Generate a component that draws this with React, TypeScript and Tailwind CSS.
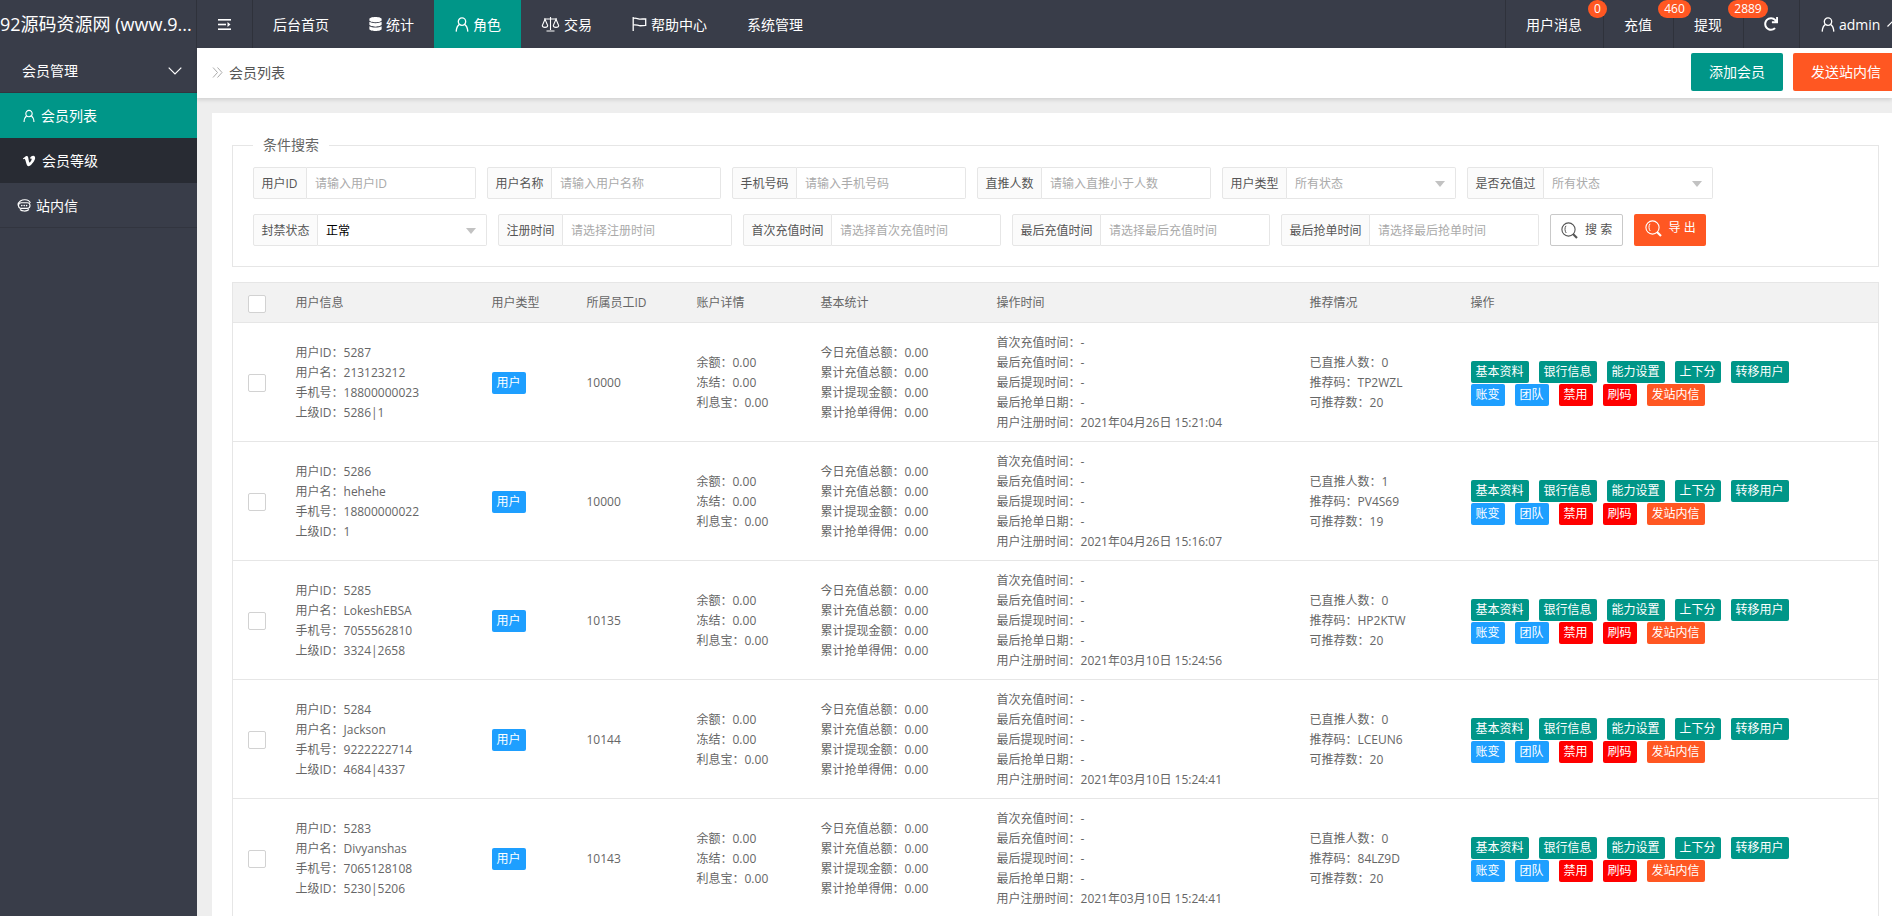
import React from 'react';
import { FaDatabase, FaVimeoV, FaRedo } from 'react-icons/fa';

const UserIcon = ({ className = 'w-[14px] h-[15px]' }: { className?: string }) => (
  <svg viewBox="0 0 14 15" fill="none" stroke="currentColor" strokeWidth="1.3" className={className}>
    <circle cx="7" cy="4.6" r="3.7" />
    <path d="M4.2 7.6C2.4 8.8 1.4 11 1.2 14.6M9.8 7.6c1.8 1.2 2.8 3.4 3 7" />
  </svg>
);

const ScaleIcon = () => (
  <svg viewBox="0 0 18 16" fill="none" stroke="currentColor" strokeWidth="1.1" className="w-[19px] h-[16px]">
    <path d="M9 1v13M5 15h8M2.5 3h13" />
    <path d="M3.5 3.2.8 9.6c0 2.4 5.4 2.4 5.4 0L3.5 3.2zM14.5 3.2l-2.7 6.4c0 2.4 5.4 2.4 5.4 0l-2.7-6.4z" />
  </svg>
);

const FlagIcon = () => (
  <svg viewBox="0 0 15 14" fill="none" stroke="currentColor" strokeWidth="1.3" className="w-[15px] h-[14px]">
    <path d="M1.2 0v14" />
    <path d="M1.2 1.5c2.5-1 4 .3 6 .6 2 .3 4-.3 6.5-.3v6.6c-2.5 0-4.5.6-6.5.3-2-.3-3.5-1.5-6-.7" />
  </svg>
);

const ShrinkIcon = () => (
  <svg viewBox="0 0 13 11" fill="currentColor" className="w-[13px] h-[11px]">
    <rect x="0" y="0" width="13" height="1.6" />
    <rect x="0" y="4.7" width="8" height="1.6" />
    <rect x="0" y="9.4" width="13" height="1.6" />
    <path d="M9.5 3l3 2.5-3 2.5z" />
  </svg>
);

const ChatIcon = () => (
  <svg viewBox="0 0 14 13" fill="none" stroke="currentColor" strokeWidth="1.1" className="w-[14px] h-[13px]">
    <path d="M1 6.5C.9 2.5 5 .6 8 .7c2.8.1 4.8 1.5 5.3 3.3" />
    <rect x="1.5" y="3.8" width="11.5" height="5.6" rx="2.8" />
    <path d="M3 10.5c2 2 6.5 2.2 9 0" />
    <circle cx="4.8" cy="6.6" r=".8" fill="currentColor" stroke="none" />
    <circle cx="7.2" cy="6.6" r=".8" fill="currentColor" stroke="none" />
    <circle cx="9.6" cy="6.6" r=".8" fill="currentColor" stroke="none" />
  </svg>
);

const SearchIcon = () => (
  <svg viewBox="0 0 17 17" fill="none" stroke="currentColor" className="w-[17px] h-[17px]">
    <circle cx="7.5" cy="7.5" r="6.6" strokeWidth="1.1" />
    <path d="M5 3.8C3.6 5.5 3.6 9 5.2 11" strokeWidth="1" />
    <path d="M12 12l4 4" strokeWidth="2.2" />
  </svg>
);

function NavItem({ icon, children, active }: { icon?: React.ReactNode; children: React.ReactNode; active?: boolean }) {
  return (
    <div className={`flex items-center gap-[3px] pr-[20px] h-full whitespace-nowrap ${active ? 'pl-[21px] bg-[#009688]' : 'pl-[20px]'}`}>
      {icon}
      <span className={icon ? 'ml-[1px]' : ''}>{children}</span>
    </div>
  );
}

function RightItem({ label, badge, badgeClass }: { label: string; badge: string; badgeClass: string }) {
  return (
    <div className="relative flex items-center h-full shrink-0 whitespace-nowrap border-l border-[#2f323b] pl-[20px] pr-[21px]">
      {label}
      <span className={`absolute z-10 top-0 h-[18px] rounded-[9px] bg-[#FF5722] text-white text-[12px] leading-[18px] text-center ${badgeClass}`}>
        {badge}
      </span>
    </div>
  );
}

function Field({ label, placeholder, select, value, labelClass = '' }: { label: string; placeholder?: string; select?: boolean; value?: string; labelClass?: string }) {
  return (
    <div className="flex h-[32px] text-[12px]">
      <label className={`flex items-center px-[7.5px] pt-px border border-[#e6e6e6] bg-[#fbfbfb] rounded-l-[2px] text-[#555] whitespace-nowrap ${labelClass}`}>
        {label}
      </label>
      {select ? (
        <div className="relative flex items-center w-[169px] pl-[8px] pt-px bg-white border border-l-0 border-[#e6e6e6] rounded-r-[2px]">
          <span className={value ? 'text-black' : 'text-[#aaa]'}>{value || placeholder}</span>
          <span className="absolute right-[10px] top-[13px] w-0 h-0 border-x-[5px] border-x-transparent border-t-[6px] border-t-[#c2c2c2]" />
        </div>
      ) : (
        <input
          placeholder={placeholder}
          className="w-[169px] pl-[8px] pt-px bg-white border border-l-0 border-[#e6e6e6] rounded-r-[2px] outline-none placeholder:text-[#aaa]"
        />
      )}
    </div>
  );
}

const rows = [
  { id: '5287', name: '213123212', phone: '18800000023', parent: '5286|1', staff: '10000', direct: '0', code: 'TP2WZL', left: '20', reg: '2021年04月26日 15:21:04' },
  { id: '5286', name: 'hehehe', phone: '18800000022', parent: '1', staff: '10000', direct: '1', code: 'PV4S69', left: '19', reg: '2021年04月26日 15:16:07' },
  { id: '5285', name: 'LokeshEBSA', phone: '7055562810', parent: '3324|2658', staff: '10135', direct: '0', code: 'HP2KTW', left: '20', reg: '2021年03月10日 15:24:56' },
  { id: '5284', name: 'Jackson', phone: '9222222714', parent: '4684|4337', staff: '10144', direct: '0', code: 'LCEUN6', left: '20', reg: '2021年03月10日 15:24:41' },
  { id: '5283', name: 'Divyanshas', phone: '7065128108', parent: '5230|5206', staff: '10143', direct: '0', code: '84LZ9D', left: '20', reg: '2021年03月10日 15:24:41' },
];

const headers = ['用户信息', '用户类型', '所属员工ID', '账户详情', '基本统计', '操作时间', '推荐情况', '操作'];

function Btn({ children, color }: { children: string; color: string }) {
  return <span className={`h-[22px] px-[5px] rounded-[2px] text-white text-[12px] leading-[22px] whitespace-nowrap ${color}`}>{children}</span>;
}

function Checkbox() {
  return <div className="w-[18px] h-[18px] bg-white border border-[#d2d2d2] rounded-[2px]" />;
}

export default function App() {
  return (
    <div className="w-[1892px] h-[916px] overflow-hidden flex flex-col bg-[#eee] font-['Open_Sans','Noto_Sans_CJK_SC',sans-serif] text-[12px] text-[#666]">
      {/* 顶部导航 */}
      <header className="flex h-[48px] shrink-0 bg-[#393D49] text-white text-[14px] overflow-hidden">
        <div className="w-[197px] shrink-0 flex items-center overflow-hidden border-r border-[#2f323b] text-[18px] whitespace-nowrap">
          92源码资源网 (www.9...
        </div>
        <div className="w-[56px] shrink-0 flex items-center justify-center border-r border-[#2f323b]">
          <ShrinkIcon />
        </div>
        <nav className="w-[1252px] shrink-0 flex items-center h-full">
          <NavItem>后台首页</NavItem>
          <NavItem icon={<FaDatabase className="w-[13px] h-[14px]" />}>统计</NavItem>
          <NavItem icon={<UserIcon />} active>角色</NavItem>
          <NavItem icon={<ScaleIcon />}>交易</NavItem>
          <NavItem icon={<FlagIcon />}>帮助中心</NavItem>
          <NavItem>系统管理</NavItem>
        </nav>
        <RightItem label="用户消息" badge="0" badgeClass="left-[82px] w-[19px]" />
        <RightItem label="充值" badge="460" badgeClass="left-[54px] w-[33px]" />
        <RightItem label="提现" badge="2889" badgeClass="left-[54px] w-[40px]" />
        <div className="flex items-center h-full w-[56px] shrink-0 border-l border-[#2f323b] pl-[20px]">
          <FaRedo className="w-[14px] h-[14px]" />
        </div>
        <div className="flex items-center h-full shrink-0 border-l border-[#2f323b] pl-[21px] gap-[4px]">
          <UserIcon />
          <span>admin</span>
          <svg viewBox="0 0 10 6" fill="none" stroke="currentColor" strokeWidth="1.2" className="w-[10px] h-[6px] ml-[3px] shrink-0">
            <path d="M.5 5.5 5 1l4.5 4.5" />
          </svg>
        </div>
      </header>

      <div className="flex flex-1 min-h-0">
        {/* 侧边栏 */}
        <aside className="w-[197px] shrink-0 bg-[#393D49] text-white text-[14px]">
          <div className="relative flex items-center h-[45px] pl-[22px] border-b border-[#32353f]">
            会员管理
            <svg viewBox="0 0 14 8" fill="none" stroke="currentColor" strokeWidth="1.2" className="absolute left-[168px] top-[19px] w-[14px] h-[8px]">
              <path d="M.7.7 7 7 13.3.7" />
            </svg>
          </div>
          <div className="flex items-center h-[45px] pl-[23px] gap-[6px] bg-[#009688]">
            <UserIcon className="w-[12px] h-[14px]" />
            会员列表
          </div>
          <div className="flex items-center h-[45px] pl-[22px] gap-[6px] bg-[#282b33]">
            <FaVimeoV className="w-[14px] h-[14px]" />
            会员等级
          </div>
          <div className="flex items-center h-[45px] pl-[17px] gap-[5px] border-b border-[#32353f]">
            <ChatIcon />
            站内信
          </div>
        </aside>

        <main className="flex-1 min-w-0 flex flex-col">
          {/* 面包屑 */}
          <div className="relative flex h-[50px] shrink-0 items-center bg-white shadow-[0_2px_4px_rgba(0,0,0,0.12)]">
            <div className="w-[1494px] shrink-0 flex items-center pl-[15px] -mt-px text-[14px] text-[#555]">
              <svg viewBox="0 0 11 11" fill="none" stroke="#aaa" strokeWidth="1" className="w-[11px] h-[11px] mr-[6px]">
                <path d="M1 .5 5.5 5.5 1 10.5M5.5.5 10 5.5 5.5 10.5" />
              </svg>
              会员列表
            </div>
            <div className="flex gap-[10px] shrink-0 -mt-[3px] text-white text-[14px]">
              <button className="h-[38px] px-[18px] rounded-[2px] bg-[#009688] whitespace-nowrap">添加会员</button>
              <button className="h-[38px] px-[18px] rounded-[2px] bg-[#FF5722] whitespace-nowrap">发送站内信</button>
            </div>
          </div>

          <div className="flex-1 min-h-0 pl-[15px] pt-[15px] overflow-hidden">
            <div className="bg-white pl-[20px] pr-[13px] h-full">
              {/* 条件搜索 */}
              <fieldset className="border border-[#e6e6e6] mt-[22px] inline-block align-top w-full pl-[20px] pt-[12px] pb-[20px]">
                <legend className="px-[10px] text-[14px] leading-[20px] text-[#666]">条件搜索</legend>
                <div className="flex gap-x-[11px]">
                  <Field label="用户ID" placeholder="请输入用户ID" labelClass="w-[54px]" />
                  <Field label="用户名称" placeholder="请输入用户名称" />
                  <Field label="手机号码" placeholder="请输入手机号码" />
                  <Field label="直推人数" placeholder="请输入直推小于人数" />
                  <Field label="用户类型" placeholder="所有状态" select />
                  <Field label="是否充值过" placeholder="所有状态" select />
                </div>
                <div className="flex gap-x-[11px] mt-[15px]">
                  <Field label="封禁状态" value="正常" select />
                  <Field label="注册时间" placeholder="请选择注册时间" />
                  <Field label="首次充值时间" placeholder="请选择首次充值时间" />
                  <Field label="最后充值时间" placeholder="请选择最后充值时间" />
                  <Field label="最后抢单时间" placeholder="请选择最后抢单时间" />
                  <button className="flex items-center justify-center gap-[7px] w-[73px] h-[32px] border border-[#c9c9c9] rounded-[2px] bg-white text-[#555] whitespace-pre">
                    <SearchIcon />搜 索
                  </button>
                  <button className="flex items-center justify-center gap-[7px] w-[72px] h-[32px] pb-[4px] rounded-[2px] bg-[#FF5722] text-white whitespace-pre">
                    <SearchIcon />导 出
                  </button>
                </div>
              </fieldset>

              {/* 会员表格 */}
              <table className="w-full table-fixed border-collapse mt-[15px] text-[12px] leading-[20px]">
                <colgroup>
                  <col className="w-[48px]" />
                  <col className="w-[196px]" />
                  <col className="w-[95px]" />
                  <col className="w-[110px]" />
                  <col className="w-[124px]" />
                  <col className="w-[176px]" />
                  <col className="w-[313px]" />
                  <col className="w-[161px]" />
                  <col />
                </colgroup>
                <thead>
                  <tr className="h-[40px] bg-[#f2f2f2] border border-[#e6e6e6]">
                    <th className="pl-[15px] pt-[3px] font-normal text-left"><Checkbox /></th>
                    {headers.map((h) => (
                      <th key={h} className="pl-[15px] font-normal text-left">{h}</th>
                    ))}
                  </tr>
                </thead>
                <tbody>
                  {rows.map((r) => (
                    <tr key={r.id} className="h-[119px] border border-[#e6e6e6]">
                      <td className="pl-[15px] pt-[2px]"><Checkbox /></td>
                      <td className="pl-[15px] pt-px">
                        <div>用户ID：{r.id}</div>
                        <div>用户名：{r.name}</div>
                        <div>手机号：{r.phone}</div>
                        <div>上级ID：{r.parent}</div>
                      </td>
                      <td className="pl-[15px] pt-[2px]">
                        <span className="inline-block h-[22px] w-[34px] rounded-[2px] bg-[#1E9FFF] text-white text-center leading-[22px]">用户</span>
                      </td>
                      <td className="pl-[15px] pt-px">{r.staff}</td>
                      <td className="pl-[15px] pt-px">
                        <div>余额：0.00</div>
                        <div>冻结：0.00</div>
                        <div>利息宝：0.00</div>
                      </td>
                      <td className="pl-[15px] pt-px">
                        <div>今日充值总额：0.00</div>
                        <div>累计充值总额：0.00</div>
                        <div>累计提现金额：0.00</div>
                        <div>累计抢单得佣：0.00</div>
                      </td>
                      <td className="pl-[15px] pt-px">
                        <div>首次充值时间：-</div>
                        <div>最后充值时间：-</div>
                        <div>最后提现时间：-</div>
                        <div>最后抢单日期：-</div>
                        <div>用户注册时间：{r.reg}</div>
                      </td>
                      <td className="pl-[15px] pt-px">
                        <div>已直推人数：{r.direct}</div>
                        <div>推荐码：{r.code}</div>
                        <div>可推荐数：{r.left}</div>
                      </td>
                      <td className="pl-[15px] pt-[2px]">
                        <div className="flex gap-[10px]">
                          <Btn color="bg-[#009688]">基本资料</Btn>
                          <Btn color="bg-[#009688]">银行信息</Btn>
                          <Btn color="bg-[#009688]">能力设置</Btn>
                          <Btn color="bg-[#009688]">上下分</Btn>
                          <Btn color="bg-[#009688]">转移用户</Btn>
                        </div>
                        <div className="flex gap-[10px] mt-[1px]">
                          <Btn color="bg-[#1E9FFF]">账变</Btn>
                          <Btn color="bg-[#1E9FFF]">团队</Btn>
                          <Btn color="bg-[#FF0000]">禁用</Btn>
                          <Btn color="bg-[#FF0000]">刷码</Btn>
                          <Btn color="bg-[#FF5722]">发站内信</Btn>
                        </div>
                      </td>
                    </tr>
                  ))}
                </tbody>
              </table>
            </div>
          </div>
        </main>
      </div>
    </div>
  );
}
